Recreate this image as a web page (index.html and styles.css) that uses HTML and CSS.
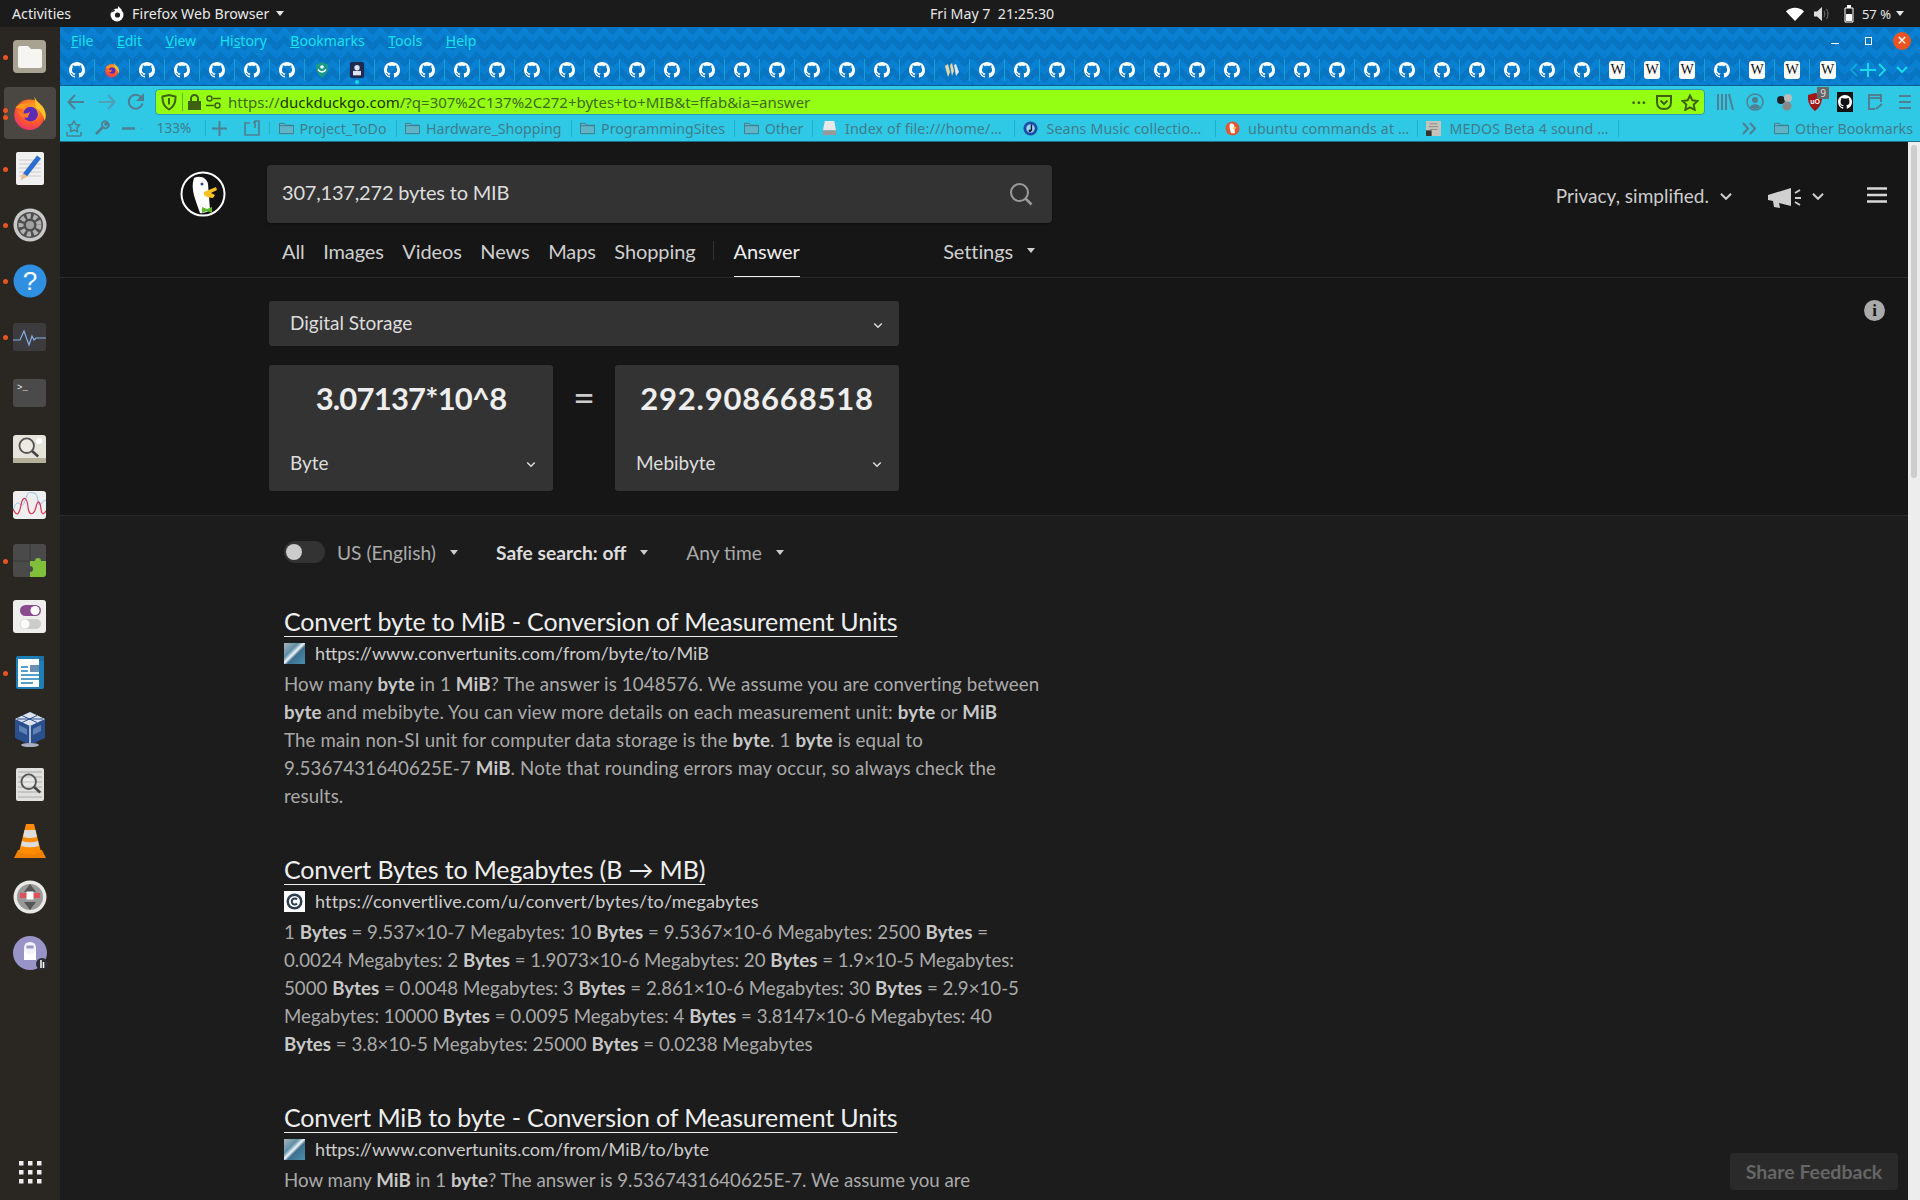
FILE: index.html
```html
<!DOCTYPE html>
<html lang="en">
<head>
    <meta charset="UTF-8">
    <title>307,137,272 bytes to MIB at DuckDuckGo</title>
    <link rel="stylesheet" href="styles.css">
</head>
<body>
    <!-- shared icons -->
    <svg class="defs" width="0" height="0">
        <defs>
            <radialGradient id="ffGrad" cx="0.6" cy="0.3" r="0.85">
                <stop offset="0" stop-color="#ffb020"/>
                <stop offset="0.55" stop-color="#ff5a2a"/>
                <stop offset="1" stop-color="#e0218a"/>
            </radialGradient>
            <symbol id="gh" viewBox="0 0 16 16">
                <path fill="#fff" d="M8 0C3.58 0 0 3.58 0 8c0 3.54 2.29 6.53 5.47 7.59.4.07.55-.17.55-.38 0-.19-.01-.82-.01-1.49-2.01.37-2.53-.49-2.69-.94-.09-.23-.48-.94-.82-1.13-.28-.15-.68-.52-.01-.53.63-.01 1.08.58 1.23.82.72 1.21 1.87.87 2.33.66.07-.52.28-.87.51-1.07-1.78-.2-3.64-.89-3.64-3.95 0-.87.31-1.59.82-2.15-.08-.2-.36-1.02.08-2.12 0 0 .67-.21 2.2.82.64-.18 1.32-.27 2-.27.68 0 1.36.09 2 .27 1.53-1.04 2.2-.82 2.2-.82.44 1.1.16 1.92.08 2.12.51.56.82 1.27.82 2.15 0 3.07-1.87 3.75-3.65 3.95.29.25.54.73.54 1.48 0 1.07-.01 1.93-.01 2.2 0 .21.15.46.55.38A8.013 8.013 0 0016 8c0-4.42-3.58-8-8-8z"/>
            </symbol>
            <symbol id="ff" viewBox="0 0 32 32">
                <circle cx="15.5" cy="17.5" r="13.5" fill="url(#ffGrad)"/>
                <path fill="#ffc42a" d="M20 1c1 4 4 6 7 9 3 4 4 9 2 13-1-6-4-9-8-12 0-4-1-7-1-10z"/>
                <path fill="#ff9a1e" d="M3 11c3-3 7-4 11-3l-3 4c-3 0-6 0-8-1z"/>
                <circle cx="16.5" cy="17" r="6.5" fill="#5a2bb5"/>
                <path fill="#ff7a2a" d="M5 14c3 3 7 3 11 1l-2 5c-4 1-8-2-9-6z"/>
            </symbol>
            <symbol id="folder" viewBox="0 0 16 14">
                <path fill="#5fb4c8" stroke="#3f7c8c" d="M.5 12.5v-11h5l1.5 2h8.5v9z"/>
                <path fill="none" stroke="#3f7c8c" d="M.5 4h15"/>
            </symbol>
            <symbol id="chev" viewBox="0 0 12 8">
                <path fill="none" stroke="currentColor" stroke-width="1.8" d="M1.5 1.5 6 6l4.5-4.5"/>
            </symbol>
            <symbol id="loupe" viewBox="0 0 34 34">
                <circle cx="14" cy="14" r="9.5" fill="#ffffff" fill-opacity=".25" stroke="#555" stroke-width="2.4"/>
                <path stroke="#444" stroke-width="3.4" d="M21 21l8 7"/>
            </symbol>
            <symbol id="duck" viewBox="0 0 32 32">
                <circle cx="16" cy="16" r="15" fill="#de5833"/>
                <path fill="#fff" d="M11 6c4-2 8 0 9 4l1 16h-8c-2-6-5-14-2-20z"/>
                <path fill="#fc3" d="M17 14l7-1-1 3-6 1z"/>
            </symbol>
        </defs>
    </svg>

    <!-- gnome top bar -->
    <header class="topbar">
        <div class="top-left">
            <span class="activities">Activities</span>
            <svg class="top-ff" width="16" height="16" viewBox="0 0 16 16"><circle cx="8" cy="9" r="6.5" fill="#fff"/><circle cx="8.5" cy="9" r="2.6" fill="#1c1c1c"/><path fill="#fff" d="M9 0l4 4-4 1z"/><path fill="#1c1c1c" d="M1 7l4-4 1 2z"/></svg>
            <span>Firefox Web Browser</span>
            <i class="caret"></i>
        </div>
        <div class="clock">Fri May 7&nbsp; 21:25:30</div>
        <div class="top-right">
            <svg width="18" height="14" viewBox="0 0 18 14"><path fill="#fff" d="M0 4.5C4.5-.5 13.5-.5 18 4.5L9 14z"/></svg>
            <svg class="speaker" width="16" height="14" viewBox="0 0 16 14"><path fill="#ddd" d="M0 4.5h3L8 0v14L3 9.5H0z"/><path fill="none" stroke="#777" d="M10 4c1 2 1 4 0 6M12.5 2c2 3 2 7 0 10"/></svg>
            <svg class="battery" width="10" height="18" viewBox="0 0 10 18"><path fill="none" stroke="#fff" d="M1 3h8v14H1z"/><path fill="#fff" d="M3 0h4v3H3zM2 9h6v7H2z"/></svg>
            <span class="battery-text">57 %</span>
            <i class="caret"></i>
        </div>
    </header>

    <div class="desktop">
        <!-- dock -->
        <nav class="dock">
            <div class="dock-item"><i class="dot"></i>
                <svg width="34" height="34" viewBox="0 0 34 34"><rect width="33" height="33" rx="4" fill="#a8a293"/><path fill="#f6f5f1" d="M5 8q0-2 2-2h8l3 3h9q2 0 2 2v15q0 2-2 2H7q-2 0-2-2z"/></svg>
            </div>
            <div class="dock-item active"><i class="dot two"></i>
                <svg width="36" height="36"><use href="#ff"/></svg>
            </div>
            <div class="dock-item"><i class="dot"></i>
                <svg width="34" height="34" viewBox="0 0 34 34"><rect x="3" width="28" height="33" rx="2" fill="#f0f0f0"/><path stroke="#ccc" d="M6 8h22M6 12h22M6 16h22M6 20h22M6 24h22"/><path stroke="#2a6fd0" stroke-width="5" d="M26 5 12 23"/><path fill="#e8c090" d="M9.5 21l5 3.5-7 4z"/></svg>
            </div>
            <div class="dock-item"><i class="dot"></i>
                <svg width="34" height="34" viewBox="0 0 34 34"><circle cx="17" cy="17" r="16.5" fill="#c8c8c8"/><circle cx="17" cy="17" r="13" fill="#4e4e4e"/><circle cx="17" cy="17" r="9" fill="none" stroke="#b0b0b0" stroke-width="5" stroke-dasharray="4 2.5"/><circle cx="17" cy="17" r="4" fill="#a0a0a0"/></svg>
            </div>
            <div class="dock-item"><i class="dot"></i>
                <svg width="34" height="34" viewBox="0 0 34 34"><circle cx="17" cy="17" r="16.5" fill="#2f8fe0"/><text x="17" y="26" class="dock-q">?</text></svg>
            </div>
            <div class="dock-item"><i class="dot"></i>
                <svg width="34" height="28" viewBox="0 0 34 28"><rect width="33" height="28" rx="3" fill="#3c3c3e"/><path fill="none" stroke="#8ab0e8" stroke-width="1.2" d="M0 17h7l4-9 5 14 3-9 2 4 2-2h10"/></svg>
            </div>
            <div class="dock-item">
                <svg width="34" height="28" viewBox="0 0 34 28"><rect width="33" height="28" rx="3" fill="#4a4a4a"/><text x="4" y="11" class="dock-term">&gt;_</text></svg>
            </div>
            <div class="dock-item">
                <svg width="34" height="28" viewBox="0 0 34 28"><rect width="33" height="28" rx="3" fill="#e6e3da"/><rect y="23" width="33" height="5" fill="#b5b09a"/><circle cx="26" cy="6" r="3" fill="#fff"/><use href="#loupe" x="3" y="0" width="26" height="26"/></svg>
            </div>
            <div class="dock-item">
                <svg width="34" height="28" viewBox="0 0 34 28"><rect width="33" height="28" rx="3" fill="#efefef"/><path fill="none" stroke="#90c0e8" d="M0 20c5-18 8 2 12-10s4-8 9-8 3 14 6 12 3-6 6-4"/><path fill="none" stroke="#d83050" stroke-width="1.2" d="M0 18c4 8 6 6 8-4s6-8 7 2 6 8 8 0 4-6 5 2 3 4 5 2"/></svg>
            </div>
            <div class="dock-item"><i class="dot"></i>
                <svg width="34" height="34" viewBox="0 0 34 34"><rect width="33" height="33" rx="3" fill="#4a4a4a"/><path fill="#7fbf3a" d="M17 17h16v13q0 3-3 3H17z"/><circle cx="25" cy="17" r="3" fill="#7fbf3a"/><circle cx="17" cy="25" r="3" fill="#4a4a4a"/><path stroke="#3a3a3a" d="M17 0v17M0 17h17"/></svg>
            </div>
            <div class="dock-item">
                <svg width="34" height="34" viewBox="0 0 34 34"><rect width="33" height="33" rx="3" fill="#eeeeec"/><rect x="7" y="5" width="21" height="11" rx="5.5" fill="#8a4a90"/><circle cx="22" cy="10.5" r="4.5" fill="#fff"/><rect x="7" y="19" width="21" height="10" rx="5" fill="#ccc"/><circle cx="12" cy="24" r="4.5" fill="#fff"/></svg>
            </div>
            <div class="dock-item"><i class="dot"></i>
                <svg width="34" height="34" viewBox="0 0 34 34"><path fill="#1d7fb5" d="M3 2q0-2 2-2h22l4 4v27q0 2-2 2H5q-2 0-2-2z"/><path fill="#fff" d="M5 3h21v28H5z"/><path fill="#1c6fa5" d="M26 0h5v5h-5z"/><path stroke="#1d7fb5" stroke-width="1.5" d="M8 11h7M8 15h7M8 19h18M8 23h18M8 27h12"/><rect x="17" y="9" width="9" height="7" fill="#6a8fb0"/></svg>
            </div>
            <div class="dock-item">
                <svg width="34" height="36" viewBox="0 0 34 36"><path fill="#2a4f8f" d="M17 1 32 8v19L17 34 2 27V8z"/><path fill="#dde3ee" d="M17 15 32 8 17 1 2 8z"/><path stroke="#2a4f8f" d="M9 4.5l15 7M24 4.5l-15 7M4 8h26"/><path stroke="#dde" stroke-width="1.5" d="M17 15v19"/><path fill="#5f7fb5" d="M6 14l8 4v6l-8-4zM20 18l8-4v6l-8 4z"/><ellipse cx="17" cy="34" rx="9" ry="2" fill="#a8b0c0"/></svg>
            </div>
            <div class="dock-item">
                <svg width="30" height="34" viewBox="0 0 28 34"><rect width="28" height="33" rx="2" fill="#e0e0dc"/><path stroke="#aaa" d="M2 4h24M2 9h24M2 14h24M2 19h24M2 24h24M2 29h24"/><use href="#loupe" x="2" y="3" width="26" height="26"/></svg>
            </div>
            <div class="dock-item">
                <svg width="32" height="34" viewBox="0 0 32 34"><path fill="#f08000" d="M0 34l4-8h24l4 8z"/><path fill="#ff8c00" d="M12 0h8l7 28q-11 5-22 0z"/><path fill="#ddd" d="M10.5 6h11l1.500 7q-7 2-14 0zM8 17q8 2.500 16 0l1 5q-9 2.500-18 0z"/></svg>
            </div>
            <div class="dock-item">
                <svg width="34" height="34" viewBox="0 0 34 34"><circle cx="17" cy="17" r="16.5" fill="#e8e8e4"/><circle cx="17" cy="17" r="13" fill="#999"/><path fill="#555" d="M17 4l6 8H11zM17 30l-6-8h12z"/><rect x="7" y="13" width="20" height="5" fill="#e0505a"/><rect x="13.5" y="11.5" width="7" height="8" fill="#fff"/></svg>
            </div>
            <div class="dock-item">
                <svg width="36" height="34" viewBox="0 0 36 34"><circle cx="18" cy="17" r="17" fill="#9894c8"/><path fill="#f2f2fa" d="M12 12q0-6 6-6t6 6v12H12z"/><path fill="#9894c8" d="M14.5 9.5h7v3h-7z"/><path fill="#fff" d="M12 15l6 4 6-4v9H12z"/><circle cx="30" cy="28" r="6" fill="#2c2c34"/><path stroke="#fff" stroke-width="1.5" d="M29 24v8M31.5 26v6"/></svg>
            </div>
            <div class="dock-item dock-grid">
                <svg width="24" height="24" viewBox="0 0 24 24"><path fill="#eee" d="M1 1h4.500v4.500H1zM10 1h4.500v4.500H10zM19 1h4.500v4.500H19zM1 10h4.500v4.500H1zM10 10h4.500v4.500H10zM19 10h4.500v4.500H19zM1 19h4.500v4.500H1zM10 19h4.500v4.500H10zM19 19h4.500v4.500H19z"/></svg>
            </div>
        </nav>

        <div class="window">
            <!-- menu and tabs -->
            <div class="titlebar">
                <div class="menubar">
                    <span class="menu-item"><u>F</u>ile</span>
                    <span class="menu-item"><u>E</u>dit</span>
                    <span class="menu-item"><u>V</u>iew</span>
                    <span class="menu-item">Hi<u>s</u>tory</span>
                    <span class="menu-item"><u>B</u>ookmarks</span>
                    <span class="menu-item"><u>T</u>ools</span>
                    <span class="menu-item"><u>H</u>elp</span>
                    <div class="win-buttons">
                        <i class="win-min"></i>
                        <i class="win-max"></i>
                        <i class="win-close">×</i>
                    </div>
                </div>
                <div class="tabstrip">
                    <div class="tab"><svg class="ico"><use href="#gh"/></svg></div>
                    <div class="tab"><svg class="ico"><use href="#ff"/></svg></div>
                    <div class="tab"><svg class="ico"><use href="#gh"/></svg></div>
                    <div class="tab"><svg class="ico"><use href="#gh"/></svg></div>
                    <div class="tab"><svg class="ico"><use href="#gh"/></svg></div>
                    <div class="tab"><svg class="ico"><use href="#gh"/></svg></div>
                    <div class="tab"><svg class="ico"><use href="#gh"/></svg></div>
                    <div class="tab"><svg class="ico" viewBox="0 0 16 16"><path fill="#1a9a88" d="M8 0l6 2.5q1 8-6 13.5Q1 10.5 2 2.5z"/><circle cx="8" cy="5" r="1.8" fill="#fff"/><path fill="none" stroke="#fff" stroke-width="1.5" d="M4 7.5q4 5 8 0"/></svg></div>
                    <div class="tab current"><svg class="ico" viewBox="0 0 16 18"><rect width="16" height="18" rx="2" fill="#1f2a52"/><circle cx="8" cy="6.5" r="3" fill="#dfe3ee"/><rect x="3.5" y="10" width="9" height="5" fill="#dfe3ee"/></svg></div>
                    <div class="tab"><svg class="ico"><use href="#gh"/></svg></div>
                    <div class="tab"><svg class="ico"><use href="#gh"/></svg></div>
                    <div class="tab"><svg class="ico"><use href="#gh"/></svg></div>
                    <div class="tab"><svg class="ico"><use href="#gh"/></svg></div>
                    <div class="tab"><svg class="ico"><use href="#gh"/></svg></div>
                    <div class="tab"><svg class="ico"><use href="#gh"/></svg></div>
                    <div class="tab"><svg class="ico"><use href="#gh"/></svg></div>
                    <div class="tab"><svg class="ico"><use href="#gh"/></svg></div>
                    <div class="tab"><svg class="ico"><use href="#gh"/></svg></div>
                    <div class="tab"><svg class="ico"><use href="#gh"/></svg></div>
                    <div class="tab"><svg class="ico"><use href="#gh"/></svg></div>
                    <div class="tab"><svg class="ico"><use href="#gh"/></svg></div>
                    <div class="tab"><svg class="ico"><use href="#gh"/></svg></div>
                    <div class="tab"><svg class="ico"><use href="#gh"/></svg></div>
                    <div class="tab"><svg class="ico"><use href="#gh"/></svg></div>
                    <div class="tab"><svg class="ico"><use href="#gh"/></svg></div>
                    <div class="tab"><svg class="ico" viewBox="0 0 16 16"><path fill="#e8d8a8" d="M1 4l3-2 2 8-2 5zM6 3l2-2 2 8-2 5z"/><path fill="#dfe8ee" d="M10 3l2-1 3 8-3 4z"/></svg></div>
                    <div class="tab"><svg class="ico"><use href="#gh"/></svg></div>
                    <div class="tab"><svg class="ico"><use href="#gh"/></svg></div>
                    <div class="tab"><svg class="ico"><use href="#gh"/></svg></div>
                    <div class="tab"><svg class="ico"><use href="#gh"/></svg></div>
                    <div class="tab"><svg class="ico"><use href="#gh"/></svg></div>
                    <div class="tab"><svg class="ico"><use href="#gh"/></svg></div>
                    <div class="tab"><svg class="ico"><use href="#gh"/></svg></div>
                    <div class="tab"><svg class="ico"><use href="#gh"/></svg></div>
                    <div class="tab"><svg class="ico"><use href="#gh"/></svg></div>
                    <div class="tab"><svg class="ico"><use href="#gh"/></svg></div>
                    <div class="tab"><svg class="ico"><use href="#gh"/></svg></div>
                    <div class="tab"><svg class="ico"><use href="#gh"/></svg></div>
                    <div class="tab"><svg class="ico"><use href="#gh"/></svg></div>
                    <div class="tab"><svg class="ico"><use href="#gh"/></svg></div>
                    <div class="tab"><svg class="ico"><use href="#gh"/></svg></div>
                    <div class="tab"><svg class="ico"><use href="#gh"/></svg></div>
                    <div class="tab"><svg class="ico"><use href="#gh"/></svg></div>
                    <div class="tab"><svg class="ico"><use href="#gh"/></svg></div>
                    <div class="tab"><span class="wiki">W</span></div>
                    <div class="tab"><span class="wiki">W</span></div>
                    <div class="tab"><span class="wiki">W</span></div>
                    <div class="tab"><svg class="ico"><use href="#gh"/></svg></div>
                    <div class="tab"><span class="wiki">W</span></div>
                    <div class="tab"><span class="wiki">W</span></div>
                    <div class="tab"><span class="wiki">W</span></div>
                    <svg class="tab-ctrl" width="62" height="18" viewBox="0 0 62 18" fill="none" stroke="#16dcea" stroke-width="2"><path stroke-opacity=".45" d="M9 3 3 9l6 6"/><path d="M12 9h16M20 2v14M31 3l6 6-6 6M49 6l5 5 5-5"/></svg>
                </div>
            </div>

            <!-- url bar -->
            <div class="navbar">
                <div class="nav-btn"><svg width="20" height="18" viewBox="0 0 20 18" fill="none" stroke="#4f7f90" stroke-width="2"><path d="M18 9H3M9 2 2.5 9 9 16"/></svg></div>
                <div class="nav-btn"><svg width="20" height="18" viewBox="0 0 20 18" fill="none" stroke="#4f9fb5" stroke-width="2"><path d="M2 9h15M11 2l6.500 7L11 16"/></svg></div>
                <div class="nav-btn"><svg class="reload" width="18" height="18" viewBox="0 0 18 18" fill="none" stroke="#4f7f90" stroke-width="2"><path d="M15.5 10.500A7 7 0 1 1 14 4l2 2"/><path fill="#4f7f90" stroke="none" d="M17 0v8h-8z"/></svg></div>
                <div class="urlbar">
                    <svg class="url-shield" width="16" height="17" viewBox="0 0 16 17"><path fill="none" stroke="#3f6010" stroke-width="2" d="M1.5 2.500 8 1l6.500 1.500q.5 9-6.500 13-7-4-6.500-13z"/><path fill="#3f6010" d="M7 4h2v6.500H7z"/></svg>
                    <i class="url-sep"></i>
                    <svg class="url-lock" width="13" height="16" viewBox="0 0 13 16"><path fill="#3f6010" d="M0 7h13v9H0z"/><path fill="none" stroke="#3f6010" stroke-width="2" d="M3 7V4.500a3.500 3.500 0 0 1 7 0V7"/></svg>
                    <svg class="url-perm" width="15" height="15" viewBox="0 0 15 15" fill="none" stroke="#3f6010" stroke-width="1.5"><circle cx="3.5" cy="3.5" r="2.5"/><path d="M7 3.500h8M0 10.500h8"/><circle cx="11.5" cy="10.5" r="2.5"/></svg>
                    <span class="url-text">https://<b>duckduckgo.com</b>/?q=307%2C137%2C272+bytes+to+MIB&amp;t=ffab&amp;ia=answer</span>
                    <span class="url-dots">•••</span>
                    <svg width="16" height="15" viewBox="0 0 16 15" fill="none" stroke="#3f6010" stroke-width="2"><path d="M1 1h14v6q0 7-7 7T1 7z"/><path d="M4.5 5.500 8 9l3.500-3.500"/></svg>
                    <svg class="url-star" width="18" height="17" viewBox="0 0 18 17"><path fill="none" stroke="#3f6010" stroke-width="2" d="M9 1.500l2.300 4.800 5.200.7-3.800 3.600 1 5.200L9 13.300l-4.700 2.500 1-5.200L1.500 7l5.200-.7z"/></svg>
                </div>
                <div class="nav-btn"><svg width="18" height="16" viewBox="0 0 18 16" fill="none" stroke="#4f7f90" stroke-width="2"><path d="M2 0v16M6 0v16M10 0v16M13 0l4 16"/></svg></div>
                <div class="nav-btn"><svg width="18" height="18" viewBox="0 0 18 18"><circle cx="9" cy="9" r="8" fill="none" stroke="#4f7f90" stroke-width="1.5"/><circle cx="9" cy="7" r="3" fill="#4f7f90"/><path fill="#4f7f90" d="M3.5 14q5.500-6 11 0-5.500 4-11 0z"/></svg></div>
                <div class="nav-btn"><svg width="18" height="18" viewBox="0 0 18 18"><circle cx="5" cy="7" r="4" fill="#222"/><circle cx="12" cy="5" r="4" fill="#bbb"/><circle cx="11" cy="13" r="4.5" fill="#888"/></svg></div>
                <div class="nav-btn ublock">
                    <svg width="14" height="18" viewBox="0 0 14 18"><path fill="#a01818" d="M7 0l7 2q1 10-7 16Q-1 12 0 2z"/><text x="7" y="11" class="ub-text">uO</text></svg>
                    <span class="ub-badge">9</span>
                </div>
                <div class="nav-btn"><span class="gh-box"><svg width="14" height="14"><use href="#gh"/></svg></span></div>
                <div class="nav-btn"><svg width="17" height="18" viewBox="0 0 17 18" fill="none" stroke="#4f7f90" stroke-width="2"><path d="M14 9V2H2v14h6M2 5h12"/><path d="M9 16l6-5"/></svg></div>
                <div class="nav-btn"><svg width="16" height="14" viewBox="0 0 16 14" fill="none" stroke="#4f7f90" stroke-width="2"><path d="M2 1h12M2 7h12M2 13h12"/></svg></div>
            </div>

            <!-- bookmarks -->
            <div class="bookmarks">
                <div class="bm-tool bm-first"><svg width="16" height="17" viewBox="0 0 16 17" fill="none" stroke="#4f7f90" stroke-width="1.5"><path d="M8 1l2 3.500 3.500.5-2.500 3 .5 3.500L8 10l-3.500 1.500L5 8 2.500 5 6 4.500zM1 12v3q0 1 1 1h12q1 0 1-1v-3"/></svg></div>
                <div class="bm-tool"><svg width="16" height="16" viewBox="0 0 16 16" fill="none" stroke="#4f7f90" stroke-width="2.5"><path d="M2 14l7-7"/><path stroke-width="1.8" d="M9 7a3 3 0 0 1 4-5L11 4l1 1 2-2a3 3 0 0 1-5 4z"/></svg></div>
                <div class="bm-tool bm-sep"><svg width="14" height="3" viewBox="0 0 14 3"><path stroke="#4f7f90" stroke-width="2.5" d="M0 1.500h13"/></svg></div>
                <div class="bm-zoom bm-sep">133%</div>
                <div class="bm-tool"><svg width="15" height="15" viewBox="0 0 15 15"><path stroke="#4f7f90" stroke-width="2" d="M0 7.500h15M7.500 0v15"/></svg></div>
                <div class="bm-share bm-sep"><svg width="16" height="16" viewBox="0 0 16 16" fill="none" stroke="#4f7f90" stroke-width="1.7"><path d="M6 3H1v12h14V1h-4l-1.500 2"/><path d="M11 8V1"/></svg></div>
                <div class="bm bm-sep"><svg class="bm-ico"><use href="#folder"/></svg>Project_ToDo</div>
                <div class="bm bm-sep"><svg class="bm-ico"><use href="#folder"/></svg>Hardware_Shopping</div>
                <div class="bm bm-sep"><svg class="bm-ico"><use href="#folder"/></svg>ProgrammingSites</div>
                <div class="bm bm-sep"><svg class="bm-ico"><use href="#folder"/></svg>Other</div>
                <div class="bm bm-fav bm-sep"><svg class="bm-ico" viewBox="0 0 16 16"><path fill="#e8e8e8" d="M3 0h10l2 10H1z"/><path fill="#999" d="M1 10h14v5H1z"/></svg>Index of file:///home/…</div>
                <div class="bm bm-fav bm-sep"><svg class="bm-ico" viewBox="0 0 16 16"><circle cx="8" cy="8" r="7.5" fill="#1d4fa8"/><circle cx="8" cy="8" r="4.5" fill="#9ad0f0"/><path stroke="#123" stroke-width="1.5" d="M9 3.500v7"/><circle cx="7.5" cy="10.500" r="1.5" fill="#123"/></svg>Seans Music collectio…</div>
                <div class="bm bm-fav bm-sep"><svg class="bm-ico"><use href="#duck"/></svg>ubuntu commands at …</div>
                <div class="bm bm-fav bm-sep"><svg class="bm-ico" viewBox="0 0 16 16"><rect width="16" height="16" fill="#c4c4bc"/><path stroke="#8a8a80" d="M4 3h8M3 6h10M4 9h8"/><path fill="#333" d="M0 10h6v6H0z"/></svg>MEDOS Beta 4 sound …</div>
                <div class="bm-more"><svg width="14" height="13" viewBox="0 0 14 13" fill="none" stroke="#4f7f90" stroke-width="2"><path d="M1 1l5 5.500L1 12M8 1l5 5.500L8 12"/></svg></div>
                <div class="bm bm-last"><svg class="bm-ico"><use href="#folder"/></svg>Other Bookmarks</div>
            </div>

            <div class="content">
                <main class="page">
                    <div class="ddg-header">
                        <div class="head-row">
                            <svg class="ddg-logo" width="46" height="46" viewBox="0 0 46 46"><circle cx="23" cy="23" r="21.5" fill="#111" stroke="#fff" stroke-width="2"/><path fill="#fff" d="M14 7c6-3 13 0 14 6l2 26q-5 4-10 3C16 30 10 18 14 7z"/><path fill="#f8c020" d="M24 21l12-5 1 3-6 3 4 2-2 3q-6 0-9-3z"/><path fill="#5cb82c" d="M22 36l5 2 5-2v6l-5-2-5 2z"/><circle cx="22" cy="13" r="1.5" fill="#2a4a8a"/></svg>
                            <div class="searchbox">
                                <span>307,137,272 bytes to MIB</span>
                                <svg width="24" height="24" viewBox="0 0 24 24" fill="none" stroke="#9a9a9a" stroke-width="2"><circle cx="10.5" cy="10.5" r="8.5"/><path stroke-width="2.5" d="M16.5 16.500l6 6"/></svg>
                            </div>
                            <div class="head-right">
                                <span class="privacy">Privacy, simplified.</span>
                                <svg class="chev-sm" width="14" height="9"><use href="#chev"/></svg>
                                <svg class="megaphone" width="34" height="20" viewBox="0 0 34 20"><path fill="#d0d0d0" d="M0 7l23-7v18L11 15l1 5-6-1-1-6-5-1z"/><path stroke="#d0d0d0" stroke-width="1.8" d="M27 5l5-3M27 10h6M27 14l5 3"/></svg>
                                <svg class="chev-sm second" width="14" height="9"><use href="#chev"/></svg>
                                <svg class="hamburger" width="20" height="16" viewBox="0 0 20 16"><path stroke="#d8d8d8" stroke-width="2.5" d="M0 1.500h20M0 8h20M0 14.500h20"/></svg>
                            </div>
                        </div>
                        <div class="verticals">
                            <span class="vertical">All</span>
                            <span class="vertical">Images</span>
                            <span class="vertical">Videos</span>
                            <span class="vertical">News</span>
                            <span class="vertical">Maps</span>
                            <span class="vertical">Shopping</span>
                            <i class="vertical-sep"></i>
                            <span class="vertical selected">Answer</span>
                            <span class="vertical settings">Settings <i class="caret"></i></span>
                        </div>
                    </div>

                    <section class="answer">
                        <div class="conv-select">
                            <span>Digital Storage</span>
                            <svg width="10" height="7"><use href="#chev"/></svg>
                        </div>
                        <div class="conv-pair">
                            <div class="conv-box">
                                <div class="conv-value tight">3.07137*10^8</div>
                                <div class="conv-unit"><span>Byte</span><svg width="10" height="7"><use href="#chev"/></svg></div>
                            </div>
                            <div class="conv-eq">=</div>
                            <div class="conv-box">
                                <div class="conv-value wide">292.908668518</div>
                                <div class="conv-unit"><span>Mebibyte</span><svg width="10" height="7"><use href="#chev"/></svg></div>
                            </div>
                        </div>
                        <div class="info-btn">i</div>
                    </section>

                    <section class="results">
                        <div class="filters">
                            <span class="toggle"><i></i></span>
                            <span class="filter">US (English) <i class="caret"></i></span>
                            <span class="filter on">Safe search: off <i class="caret"></i></span>
                            <span class="filter">Any time <i class="caret"></i></span>
                        </div>

                        <article class="result">
                            <a class="result-title">Convert byte to MiB - Conversion of Measurement Units</a>
                            <div class="result-url"><i class="fav-units"></i>https://www.convertunits.com/from/byte/to/MiB</div>
                            <p class="snippet wordy">How many <b>byte</b> in 1 <b>MiB</b>? The answer is 1048576. We assume you are converting between<br>
                            <b>byte</b> and mebibyte. You can view more details on each measurement unit: <b>byte</b> or <b>MiB</b><br>
                            The main non-SI unit for computer data storage is the <b>byte</b>. 1 <b>byte</b> is equal to<br>
                            9.5367431640625E-7 <b>MiB</b>. Note that rounding errors may occur, so always check the<br>
                            results.</p>
                        </article>

                        <article class="result">
                            <a class="result-title">Convert Bytes to Megabytes (B → MB)</a>
                            <div class="result-url wide"><svg class="fav-live" width="21" height="21" viewBox="0 0 21 21"><rect width="21" height="21" fill="#fff"/><circle cx="10.5" cy="10.5" r="8" fill="#2c3e50"/><circle cx="10.5" cy="10.5" r="5.5" fill="#fff"/><path fill="none" stroke="#2c3e50" stroke-width="2" d="M13 8.500a3 3 0 1 0 0 4"/></svg>https://convertlive.com/u/convert/bytes/to/megabytes</div>
                            <p class="snippet">1 <b>Bytes</b> = 9.537×10-7 Megabytes: 10 <b>Bytes</b> = 9.5367×10-6 Megabytes: 2500 <b>Bytes</b> =<br>
                            0.0024 Megabytes: 2 <b>Bytes</b> = 1.9073×10-6 Megabytes: 20 <b>Bytes</b> = 1.9×10-5 Megabytes:<br>
                            5000 <b>Bytes</b> = 0.0048 Megabytes: 3 <b>Bytes</b> = 2.861×10-6 Megabytes: 30 <b>Bytes</b> = 2.9×10-5<br>
                            Megabytes: 10000 <b>Bytes</b> = 0.0095 Megabytes: 4 <b>Bytes</b> = 3.8147×10-6 Megabytes: 40<br>
                            <b>Bytes</b> = 3.8×10-5 Megabytes: 25000 <b>Bytes</b> = 0.0238 Megabytes</p>
                        </article>

                        <article class="result">
                            <a class="result-title">Convert MiB to byte - Conversion of Measurement Units</a>
                            <div class="result-url"><i class="fav-units"></i>https://www.convertunits.com/from/MiB/to/byte</div>
                            <p class="snippet">How many <b>MiB</b> in 1 <b>byte</b>? The answer is 9.5367431640625E-7. We assume you are</p>
                        </article>
                    </section>

                    <div class="feedback">Share Feedback</div>
                </main>
                <div class="scrollbar"><i></i></div>
            </div>
        </div>
    </div>
</body>
</html>
```

FILE: styles.css
```css
* {
    box-sizing: border-box;
}
html, body {
    margin: 0;
    height: 1200px;
    overflow: hidden;
}
body {
    font-family: "Noto Sans", sans-serif;
    background-color: #1c1c1c;
    color: #eee;
}
i {
    font-style: normal;
}
svg {
    display: block;
    flex: none;
}
.defs {
    position: absolute;
}
.caret {
    display: inline-block;
    border-left: 4px solid transparent;
    border-right: 4px solid transparent;
    border-top: 5px solid currentColor;
}

/* top bar */
.topbar {
    height: 27px;
    display: flex;
    align-items: center;
    background-color: #1b1b1b;
    font-size: 14.2px;
    color: #e8e8e8;
}
.top-left {
    width: 930px;
    padding-left: 12px;
    display: flex;
    align-items: center;
}
.activities {
    margin-right: 38px;
}
.top-ff {
    margin-right: 7px;
}
.top-left .caret {
    margin-left: 7px;
}
.clock {
    width: 122px;
    white-space: nowrap;
}
.top-right {
    margin-left: auto;
    padding-right: 16px;
    display: flex;
    align-items: center;
}
.speaker {
    margin-left: 10px;
}
.battery {
    margin-left: 14px;
}
.battery-text {
    margin-left: 8px;
    margin-right: 5px;
    font-size: 13px;
}

/* dock */
.desktop {
    display: flex;
    height: 1173px;
}
.dock {
    width: 60px;
    flex: none;
    background-color: #2a2622;
    display: flex;
    flex-direction: column;
    padding-top: 2px;
}
.dock-item {
    position: relative;
    height: 56px;
    flex: none;
    display: flex;
    align-items: center;
    justify-content: center;
    margin-left: 4px;
    width: 52px;
}
.dock-item.active {
    background-color: #4a4642;
    border-radius: 4px;
    height: 52px;
    margin: 2px 0 2px 4px;
}
.dock-grid {
    margin-top: auto;
    height: 56px;
}
.dot {
    position: absolute;
    left: -1px;
    top: 26px;
    width: 5px;
    height: 5px;
    border-radius: 50%;
    background-color: #e95420;
}
.dot.two {
    top: 21px;
    box-shadow: 0 7px 0 #e95420;
}
.dock-q {
    font-family: "Liberation Sans", sans-serif;
    font-size: 26px;
    fill: #fff;
    text-anchor: middle;
}
.dock-term {
    font-family: "Liberation Mono", monospace;
    font-size: 9px;
    fill: #eee;
}

/* firefox chrome */
.window {
    flex: 1;
    min-width: 0;
    display: flex;
    flex-direction: column;
}
.titlebar {
    height: 59px;
    background-color: #0a80d2;
    background-image:
        linear-gradient(135deg, #0775c2 25%, transparent 25%),
        linear-gradient(225deg, #0775c2 25%, transparent 25%),
        linear-gradient(45deg, #0775c2 25%, transparent 25%),
        linear-gradient(315deg, #0775c2 25%, #0a80d2 25%);
    background-position: 8px 0, 8px 0, 0 0, 0 0;
    background-size: 16px 16px;
    border-bottom: 1px solid #0b5f8f;
}
.menubar {
    height: 27px;
    display: flex;
    align-items: center;
    font-size: 14px;
    color: #13e4ee;
    padding-left: 11px;
}
.menu-item {
    margin-right: 23.5px;
}
.win-buttons {
    margin-left: auto;
    display: flex;
    align-items: center;
}
.win-min {
    width: 8px;
    height: 1px;
    background-color: #fff;
    margin-right: 26px;
    margin-top: 5px;
}
.win-max {
    width: 7px;
    height: 8px;
    border: 1px solid #fff;
    margin-right: 21px;
}
.win-close {
    width: 18px;
    height: 18px;
    border-radius: 50%;
    background-color: #e95420;
    color: #fff;
    font-size: 16px;
    line-height: 17px;
    text-align: center;
    margin-right: 9px;
}
.tabstrip {
    height: 31px;
    display: flex;
    align-items: center;
}
.tab {
    position: relative;
    width: 35px;
    height: 22px;
    display: flex;
    align-items: center;
    justify-content: center;
    border-right: 1px solid #1a9fd2;
    flex: none;
}
.tab:nth-child(51) {
    border-right: none;
}
.tab.current::after {
    content: "";
    position: absolute;
    bottom: -3px;
    left: 15px;
    width: 4px;
    height: 4px;
    border-radius: 50%;
    background-color: #16dcea;
}
.ico {
    width: 16px;
    height: 16px;
}
.wiki {
    width: 16px;
    height: 18px;
    border-radius: 3px;
    background-color: #fff;
    color: #111;
    font-family: "Liberation Serif", serif;
    font-size: 14px;
    line-height: 18px;
    text-align: center;
}
.tab-ctrl {
    margin-left: 3px;
}
.navbar {
    height: 29px;
    flex: none;
    display: flex;
    background-color: #2fc9e6;
    align-items: center;
}
.nav-btn {
    width: 31px;
    height: 26px;
    margin-top: 3px;
    flex: none;
    display: flex;
    align-items: center;
    justify-content: center;
}
.reload {
    margin-right: 3px;
}
.urlbar ~ .nav-btn {
    width: 30px;
}
.urlbar {
    flex: 1;
    min-width: 0;
    height: 26px;
    margin: 3px 5px 0 2px;
    display: flex;
    align-items: center;
    background-color: #94ff12;
    border: 1px solid #2a9ab8;
    border-radius: 4px;
    padding-left: 5px;
    padding-right: 5px;
}
.url-sep {
    width: 1px;
    height: 18px;
    background-color: #5fb030;
    margin: 0 5px;
}
.url-perm {
    margin-left: 5px;
}
.url-text {
    margin-left: 7px;
    font-size: 15px;
    color: #3f6a20;
    white-space: nowrap;
}
.url-text b {
    font-weight: 400;
    color: #1d3300;
}
.url-dots {
    margin-left: auto;
    margin-right: 9px;
    font-size: 11px;
    letter-spacing: 1px;
    color: #3f6010;
}
.url-star {
    margin-left: 9px;
}
.ublock {
    position: relative;
}
.ub-text {
    font-family: "Liberation Sans", sans-serif;
    font-size: 7px;
    font-weight: 700;
    fill: #fff;
    text-anchor: middle;
}
.ub-badge {
    position: absolute;
    top: -2px;
    right: 1px;
    background-color: #666;
    color: #ddd;
    font-size: 10px;
    line-height: 12px;
    padding: 0 3px;
    border-radius: 1px;
}
.gh-box {
    width: 16px;
    height: 20px;
    background-color: #111;
    display: flex;
    align-items: center;
    justify-content: center;
}

/* bookmarks */
.bookmarks {
    height: 27px;
    flex: none;
    display: flex;
    align-items: center;
    background-color: #2fc9e6;
    border-bottom: 1px solid #1b6f8a;
    font-size: 14.2px;
    color: #3f7c8c;
    white-space: nowrap;
}
.bm-tool {
    width: 27px;
    display: flex;
    justify-content: center;
}
.bm-first {
    width: 28px;
}
.bm-sep {
    position: relative;
}
.bm-sep::after {
    content: "";
    position: absolute;
    right: 0;
    top: 1px;
    bottom: 1px;
    width: 1px;
    background-color: #1fb0cc;
}
.bm-zoom {
    width: 64px;
    text-align: center;
    font-size: 13.5px;
}
.bm-share {
    width: 37px;
    display: flex;
    justify-content: center;
}
.bm {
    display: flex;
    align-items: center;
    padding: 0 10px 0 8.5px;
}
.bm-ico {
    width: 15px;
    height: 15px;
    margin-right: 6px;
}
.bm-fav {
    width: 201.5px;
    letter-spacing: 0.15px;
}
.bm-fav .bm-ico {
    margin-right: 8px;
}
.bm-more {
    margin-left: auto;
    padding-right: 8px;
}
.bm-last {
    padding: 0 7px 0 10px;
}

/* page */
.content {
    flex: 1;
    min-height: 0;
    display: flex;
}
.page {
    position: relative;
    flex: 1;
    min-width: 0;
    overflow: hidden;
    font-family: "Lato", sans-serif;
    background-color: #1c1c1c;
}
.scrollbar {
    width: 12px;
    flex: none;
    background-color: #ededed;
    padding: 3px 3px;
}
.scrollbar i {
    display: block;
    height: 333px;
    border-radius: 3px;
    background-color: #cdcdcd;
}
.ddg-header {
    height: 136px;
    background-color: #161616;
    border-bottom: 1px solid #2b2b2b;
}
.head-row {
    display: flex;
    padding-top: 23px;
    padding-left: 120px;
    height: 81px;
}
.ddg-logo {
    margin-top: 6px;
    margin-right: 41px;
}
.searchbox {
    width: 785px;
    height: 58px;
    background-color: #333;
    border-radius: 4px;
    display: flex;
    align-items: center;
    justify-content: space-between;
    padding: 0 19px 4px 15px;
    font-size: 20px;
    letter-spacing: -0.2px;
    color: #ddd;
    box-shadow: 0 1px 2px rgba(0,0,0,0.4);
}
.searchbox svg {
    margin-top: 4px;
}
.head-right {
    margin-left: auto;
    padding-right: 21px;
    display: flex;
    align-items: center;
    height: 60px;
    color: #ccc;
    font-size: 19px;
}
.chev-sm {
    margin-left: 10px;
    margin-top: 3px;
}
.chev-sm.second {
    margin-left: 9px;
}
.megaphone {
    margin-left: 35px;
    margin-top: 5px;
}
.hamburger {
    margin-left: 42px;
}
.verticals {
    margin-left: 222px;
    width: 753px;
    height: 54px;
    display: flex;
    align-items: stretch;
    font-size: 20px;
    letter-spacing: -0.1px;
    color: #cfcfcf;
}
.vertical {
    display: flex;
    align-items: center;
    gap: 14px;
    margin-right: 18.5px;
    border-bottom: 1px solid transparent;
    padding-top: 2px;
}
.vertical.selected {
    color: #eee;
    border-bottom-color: #eee;
    margin-right: 0;
}
.vertical-sep {
    width: 1px;
    height: 19px;
    align-self: center;
    background-color: #333;
    margin-right: 19.5px;
    margin-left: -1px;
}
.settings {
    margin-left: auto;
    margin-right: 0;
}
.answer {
    position: relative;
    height: 238px;
    background-color: #161616;
    border-bottom: 1px solid #2b2b2b;
    padding: 23px 0 0 209px;
}
.conv-select {
    width: 630px;
    height: 45px;
    background-color: #333;
    border-radius: 3px;
    display: flex;
    align-items: center;
    justify-content: space-between;
    padding: 0 16px 3px 21px;
    font-size: 19px;
    color: #ddd;
}
.conv-select svg, .conv-unit svg {
    margin-top: 4px;
    color: #ddd;
}
.conv-select svg {
    margin-top: 7px;
}
.conv-pair {
    display: flex;
    margin-top: 19px;
    width: 630px;
}
.conv-box {
    width: 284px;
    height: 126px;
    background-color: #333;
    border-radius: 3px;
    display: flex;
    flex-direction: column;
}
.conv-value {
    height: 66px;
    line-height: 66px;
    text-align: center;
    font-size: 31px;
    font-weight: 700;
    color: #eee;
}
.conv-value.tight {
    letter-spacing: -0.8px;
}
.conv-value.wide {
    letter-spacing: 0.8px;
}
.conv-unit {
    flex: 1;
    display: flex;
    align-items: center;
    justify-content: space-between;
    padding: 2px 17px 0 21px;
    font-size: 19px;
    color: #ddd;
}
.conv-eq {
    width: 62px;
    text-align: center;
    font-size: 38px;
    line-height: 64px;
    color: #ccc;
}
.info-btn {
    position: absolute;
    right: 23px;
    top: 22px;
    width: 21px;
    height: 21px;
    border-radius: 50%;
    background-color: #aaa;
    color: #161616;
    text-align: center;
    font-family: "Liberation Serif", serif;
    font-weight: 700;
    font-size: 17px;
    line-height: 21px;
}
.results {
    padding: 25px 0 0 224px;
}
.filters {
    display: flex;
    align-items: center;
    height: 22px;
    font-size: 19.2px;
    color: #aaa;
}
.toggle {
    width: 41px;
    height: 22px;
    border-radius: 11px;
    background-color: #333;
    padding: 3px 0 0 2px;
    margin-right: 12px;
}
.toggle i {
    display: block;
    width: 16px;
    height: 16px;
    border-radius: 50%;
    background-color: #ccc;
}
.filter {
    display: flex;
    align-items: center;
    gap: 14px;
    margin-right: 38px;
}
.filter.on {
    font-weight: 700;
    color: #ddd;
}
.filter .caret {
    color: #ccc;
}
.result {
    margin-top: 42px;
}
.result + .result {
    margin-top: 43px;
}
.result-title {
    display: block;
    height: 32px;
    line-height: 32px;
    font-size: 25px;
    letter-spacing: -0.14px;
    color: #eee;
    white-space: nowrap;
    text-decoration: underline;
    text-decoration-thickness: 1px;
    text-underline-offset: 5px;
}
.result-url {
    height: 32px;
    display: flex;
    align-items: center;
    font-size: 18.05px;
    color: #ccc;
    white-space: nowrap;
}
.result-url.wide {
    letter-spacing: 0.15px;
}
.fav-units {
    width: 21px;
    height: 21px;
    flex: none;
    margin-right: 10px;
    background: linear-gradient(135deg, #a8b4b8 0%, #5f8fa8 35%, #f0f4f6 48%, #3c6f90 58%, #4a90ad 100%);
}
.fav-live {
    margin-right: 10px;
}
.snippet {
    margin: 1px 0 0;
    font-size: 18.7px;
    line-height: 28px;
    color: #aaa;
    white-space: nowrap;
}
.snippet.wordy {
    letter-spacing: 0.12px;
}
.snippet b {
    color: #c8c8c8;
}
.feedback {
    position: absolute;
    left: 1670px;
    top: 1011px;
    width: 168px;
    height: 37px;
    border-radius: 4px;
    background-color: #2a2a2a;
    color: #666;
    font-size: 19.5px;
    font-weight: 700;
    line-height: 37px;
    text-align: center;
}
```
